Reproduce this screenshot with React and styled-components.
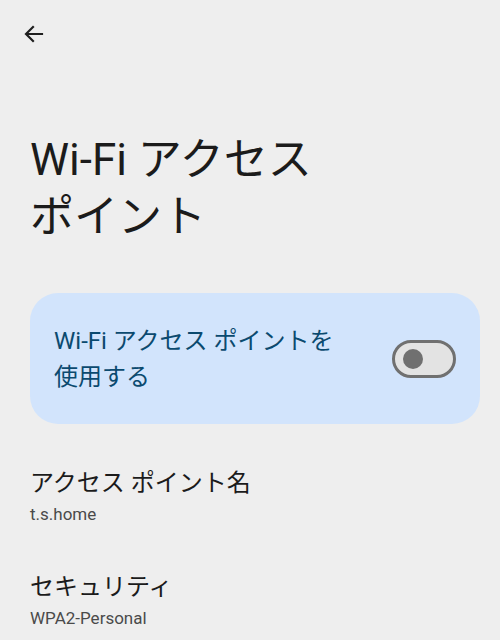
import React from "react";
import styled, { createGlobalStyle } from "styled-components";

const GlobalStyle = createGlobalStyle`
  html, body {
    margin: 0;
    padding: 0;
    background: #eeeeee;
  }
  body {
    font-family: Roboto, "Noto Sans CJK JP", sans-serif;
    -webkit-font-smoothing: antialiased;
  }
`;

const Page = styled.div`
  width: 500px;
  height: 640px;
  overflow: hidden;
  background: #eeeeee;
`;

const TopBar = styled.div`
  height: 68px;
  display: flex;
  align-items: center;
  padding-left: 18px;
`;

const BackButton = styled.button`
  width: 32px;
  height: 32px;
  display: flex;
  align-items: center;
  justify-content: center;
  border: none;
  background: none;
  padding: 0;
  cursor: pointer;
  color: #1f1f1f;
`;

const Title = styled.h1`
  margin: 64px 0 0 30px;
  font-size: 44px;
  font-weight: 400;
  line-height: 57px;
  color: #1b1b1b;
`;

const MainSwitchCard = styled.div`
  margin: 47px 20px 0 30px;
  height: 131px;
  box-sizing: border-box;
  border-radius: 28px;
  background: #d2e4fc;
  display: flex;
  align-items: center;
  justify-content: space-between;
  padding: 0 24px 0 24px;
`;

const CardLabel = styled.div`
  font-size: 24px;
  line-height: 36px;
  color: #0b4a6f;
`;

const Track = styled.div`
  width: 64px;
  height: 38px;
  box-sizing: border-box;
  border: 3px solid #707070;
  border-radius: 19px;
  background: #e3e3e3;
  display: flex;
  align-items: center;
  padding-left: 8px;
`;

const Knob = styled.div`
  width: 20px;
  height: 20px;
  border-radius: 50%;
  background: #707070;
`;

const Item = styled.div`
  padding-left: 30px;
  margin-top: ${(p) => p.top}px;
`;

const ItemTitle = styled.div`
  font-size: 24px;
  line-height: 30px;
  color: #1b1b1b;
`;

const ItemSub = styled.div`
  font-size: 17px;
  line-height: 22px;
  color: #4a4a4a;
  margin-top: 5px;
`;

function BackArrow() {
  return (
    <svg width="24" height="24" viewBox="0 0 24 24" fill="none">
      <path
        d="M20 12H4.5M11 5l-7 7 7 7"
        stroke="currentColor"
        strokeWidth="2.2"
        strokeLinecap="square"
      />
    </svg>
  );
}

export default function App() {
  return (
    <Page>
      <GlobalStyle />
      <TopBar>
        <BackButton aria-label="戻る">
          <BackArrow />
        </BackButton>
      </TopBar>
      <Title>
        Wi-Fi アクセス
        <br />
        ポイント
      </Title>
      <MainSwitchCard>
        <CardLabel>
          Wi-Fi アクセス ポイントを
          <br />
          使用する
        </CardLabel>
        <Track>
          <Knob />
        </Track>
      </MainSwitchCard>
      <Item top={44}>
        <ItemTitle>アクセス ポイント名</ItemTitle>
        <ItemSub>t.s.home</ItemSub>
      </Item>
      <Item top={47}>
        <ItemTitle>セキュリティ</ItemTitle>
        <ItemSub>WPA2-Personal</ItemSub>
      </Item>
    </Page>
  );
}
